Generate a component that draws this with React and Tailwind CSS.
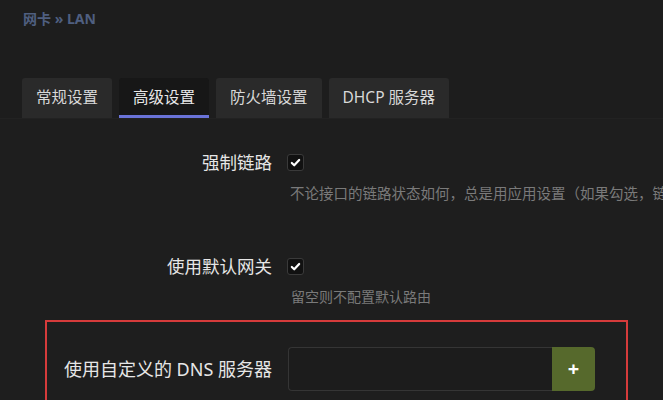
import React from 'react';

const font = { fontFamily: '"Noto Sans", "Noto Sans CJK SC", sans-serif' };

function Check() {
  return (
    <span className="flex h-[17px] w-[17px] items-center justify-center rounded-[3px] border border-[#3a3a3a] bg-[#111]">
      <svg className="h-[11px] w-[11px]" viewBox="0 0 12 12" fill="none" stroke="white" strokeWidth={2.4} strokeLinecap="round" strokeLinejoin="round">
        <path d="M2 6.5l2.6 2.5L10 3.2" />
      </svg>
    </span>
  );
}

const tabs = ['常规设置', '高级设置', '防火墙设置', 'DHCP 服务器'];

export default function App() {
  return (
    <div className="h-[400px] w-[663px] overflow-hidden bg-[#1d1d1d] text-[#e6e6e6]" style={font}>
      {/* Breadcrumb */}
      <div className="px-[23px] pt-[11px] text-[14px] font-bold leading-[16px] text-[#4f5f80]">
        网卡 » LAN
      </div>

      {/* Tabs */}
      <div className="mt-[51px] flex gap-[7px] px-[22px]">
        {tabs.map((t, i) => (
          <div
            key={t}
            className={
              i === 1
                ? 'flex h-[40px] items-center rounded-t-[3px] border-b-[3px] border-[#6a73d8] bg-[#171717] px-[14px] pt-[3px] text-[15.5px] text-[#e8e8e8]'
                : 'flex h-[40px] items-center rounded-t-[3px] bg-[#2a2a2a] px-[14px] text-[15.5px] text-[#d8d8d8]'
            }
          >
            {t}
          </div>
        ))}
      </div>

      {/* Content */}
      <div className="border-t border-[#222] bg-[#1e1e1e] pt-[31px]">
        <div className="flex h-[24px] items-center">
          <div className="w-[272px] text-right text-[17.5px] leading-[24px] text-[#e6e6e6]">强制链路</div>
          <div className="ml-[15px]"><Check /></div>
        </div>
        <div className="ml-[290px] mt-[9px] w-[373px] overflow-hidden whitespace-nowrap text-[14.5px] leading-[20px] text-[#7a7a7a]">
          不论接口的链路状态如何，总是用应用设置（如果勾选，链
        </div>

        <div className="mt-[51px] flex h-[24px] items-center">
          <div className="w-[272px] text-right text-[17.5px] leading-[24px] text-[#e6e6e6]">使用默认网关</div>
          <div className="ml-[15px]"><Check /></div>
        </div>
        <div className="ml-[291px] mt-[9px] text-[14px] leading-[20px] text-[#7a7a7a]">
          留空则不配置默认路由
        </div>

        <div className="ml-[45px] mt-[13px] h-[120px] w-[583px] border-2 border-[#d63b3b] pt-[25px]">
          <div className="flex items-center">
            <div className="w-[225px] whitespace-nowrap text-right text-[18px] leading-[24px] text-[#e6e6e6]">使用自定义的 DNS 服务器</div>
            <div className="ml-[16px] flex h-[44px]">
              <div className="w-[264px] rounded-l-[4px] border border-r-0 border-[#353535] bg-[#1c1c1c]" />
              <div className="flex w-[43px] items-center justify-center rounded-r-[4px] bg-[#56692c] text-[20px] font-bold text-white">
                +
              </div>
            </div>
          </div>
        </div>
      </div>
    </div>
  );
}
